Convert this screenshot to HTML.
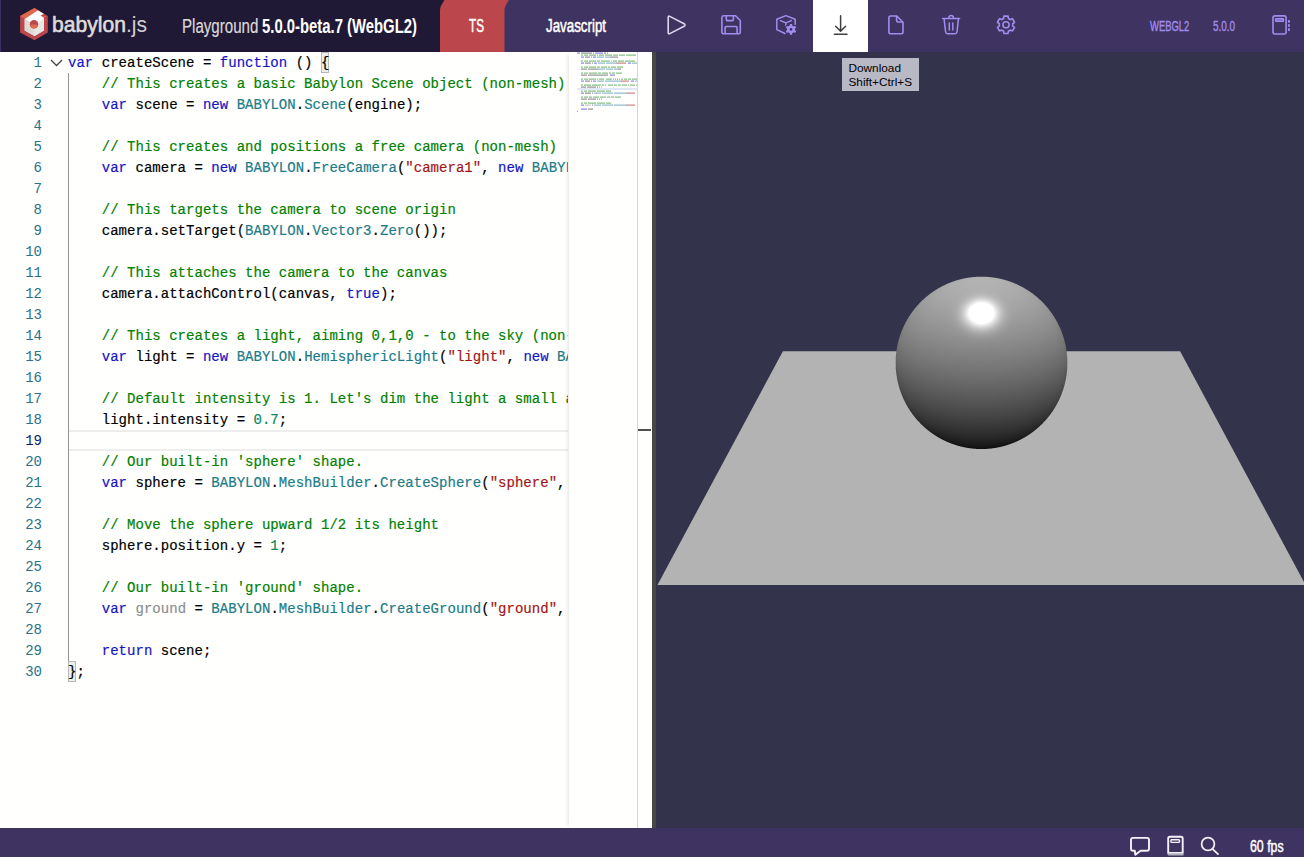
<!DOCTYPE html>
<html><head><meta charset="utf-8">
<style>
*{margin:0;padding:0;box-sizing:border-box}
html,body{width:1304px;height:857px;overflow:hidden;background:#fff;font-family:"Liberation Sans",sans-serif}
#hdr{position:absolute;left:0;top:0;width:1304px;height:52px;background:#3f3461}
#logoarea{position:absolute;left:0;top:0;width:520px;height:52px;background:#201936}
#tsTab{position:absolute;left:440px;top:0;width:72px;height:52px;background:#bb464b;border-top-left-radius:8px}
#jsTab{position:absolute;left:504px;top:0;width:146px;height:52px;background:#3f3461;border-top-left-radius:8px}
#dl{position:absolute;left:813px;top:0;width:55px;height:52px;background:#fff}
.tx{position:absolute;white-space:nowrap;transform-origin:0 0;line-height:1}
#editor{position:absolute;left:0;top:52px;width:652px;height:776px;background:#fffffe;overflow:hidden}
#splitter{position:absolute;left:652px;top:52px;width:4px;height:776px;background:#474747}
#canvasWrap{position:absolute;left:656px;top:52px;width:648px;height:776px;background:#33334c;overflow:hidden}
#footer{position:absolute;left:0;top:828px;width:1304px;height:29px;background:#3f3461}
#tooltip{position:absolute;left:842px;top:58px;width:77px;height:33px;background:#b9b8c5;font-size:11.8px;color:#000;padding:2.5px 0 0 6.5px;line-height:14.4px}
.lns{position:absolute;left:0;top:1px;width:42px;height:776px}
.code{position:absolute;left:68px;top:0;width:500px;height:776px;overflow:hidden;font-family:"Liberation Mono",monospace;font-size:14px;letter-spacing:0.03px;-webkit-text-stroke:0.18px currentColor;white-space:pre;color:#000}
.ln{position:absolute;left:0;width:42px;text-align:right;font-family:"Liberation Mono",monospace;font-size:14px;color:#2a7189;height:21px;line-height:21px}
.ln.cur{color:#0b216f}
.cl{position:absolute;left:0;height:21px;line-height:21px;margin-top:1px}
.k{color:#1414c4}.c{color:#008000}.s{color:#a31515}.n{color:#098658}.t{color:#207b86}.u{color:#8e8e8e}
.bm{}
.bbox{position:absolute;width:8px;height:21px;background:#e9f0e9;border:1px solid #b9b9b9}
#curline{position:absolute;left:69px;top:378px;width:499px;height:21px;border-top:2px solid #eeeeee;border-bottom:2px solid #eeeeee}
#guide{position:absolute;left:68px;top:21px;width:1px;height:588px;background:#939393}
#minimap{position:absolute;left:569px;top:0;width:68px;height:776px;background:#fffffe;box-shadow:-4px 0 4px -3px rgba(0,0,0,0.12)}
#mmline{position:absolute;left:637px;top:0;width:1px;height:776px;background:#d6d6d6}
#scrollmark{position:absolute;left:638px;top:377px;width:13px;height:2px;background:#505050}
</style></head><body>
<div id="hdr"></div>
<div id="logoarea"></div><div style="position:absolute;left:0;top:0;width:1px;height:52px;background:#3a3060"></div>
<svg style="position:absolute;left:0;top:0" width="1304" height="52" viewBox="0 0 1304 52">
 <path d="M440,52 L440,11 C440,8.5 440.6,6.5 441.6,4.8 L444.4,0 L520,0 L520,52Z" fill="#bb464b"/>
 <path d="M504.5,52 L504.5,11 C504.5,8.5 505.1,6.5 506.1,4.8 L508.9,0 L1304,0 L1304,52Z" fill="#3f3461"/>
</svg>
<div id="dl"></div>
<svg style="position:absolute;left:0;top:0" width="1304" height="52" viewBox="0 0 1304 52">
 <!-- logo -->
 <polygon points="34.5,8 47.8,16 47.8,32.5 34.5,40.2 20.1,32.5 20.1,16" fill="#bb464b"/>
 <polygon points="20.1,16 34.5,8 38,10.2 24.7,19" fill="#e0684b"/>
 <polygon points="24.7,19 38,10.2 43.9,14 40.5,15.5 43.9,17.5 43.9,30.6 34.5,35.9 24.7,30.6" fill="#ffffff"/>
 <polygon points="24.7,19 34.5,24.5 34.5,35.9 24.7,30.6" fill="#dedbd5"/>
 <polygon points="34.5,24.5 43.9,19 43.9,30.6 34.5,35.9" fill="#e8e6e1"/>
 <polygon points="40.5,15.5 46.5,16.5 43.9,17.5" fill="#e0684b"/>
 <circle cx="34" cy="24.3" r="4.2" fill="#bb464b"/>
 <path d="M30,25.5 Q34,23 38,25.5 Q37,28.5 34,28.5 Q31,28.5 30,25.5Z" fill="#e0684b"/>
 <!-- play -->
 <path d="M668.2,17.2 Q668.2,15.6 669.8,16.4 L684.6,24 Q685.6,25 684.6,26 L669.8,33.6 Q668.2,34.4 668.2,32.8 Z" fill="none" stroke="#dcd6ee" stroke-width="1.6" stroke-linejoin="round"/>
 <!-- save -->
 <g fill="none" stroke="#a18cf0" stroke-width="1.6" stroke-linejoin="round">
  <path d="M723.5,15.7 L735.5,15.7 L740.3,20.5 L740.3,32 Q740.3,33.7 738.6,33.7 L723.6,33.7 Q721.9,33.7 721.9,32 L721.9,17.4 Q721.9,15.7 723.5,15.7Z"/>
  <path d="M726.3,15.7 L726.3,19.4 Q726.3,20.6 727.5,20.6 L732.2,20.6 Q733.4,20.6 733.4,19.4 L733.4,15.7"/>
  <path d="M725.1,33.7 L725.1,27.6 Q725.1,26.5 726.2,26.5 L736,26.5 Q737.1,26.5 737.1,27.6 L737.1,33.7"/>
 </g>
 <!-- cube gear -->
 <g fill="none" stroke="#a18cf0" stroke-width="1.5" stroke-linejoin="round" stroke-linecap="round">
  <path d="M795.2,24.5 L795.2,19.2 L785.9,15.6 L776.8,19.2 L776.8,29.6 L785,33.5"/>
  <path d="M780.4,20.6 L785.9,22.9 L791.3,20.6 M785.9,22.9 L785.9,25.6"/>
 </g>
 <g id="cg"><path d="M792.17,25.57 L792.14,24.02 L789.86,24.02 L789.83,25.57 A4.00,4.00 0 0 0 788.27,26.47 L786.91,25.72 L785.77,27.70 L787.10,28.50 A4.00,4.00 0 0 0 787.10,30.30 L785.77,31.10 L786.91,33.08 L788.27,32.33 A4.00,4.00 0 0 0 789.83,33.23 L789.86,34.78 L792.14,34.78 L792.17,33.23 A4.00,4.00 0 0 0 793.73,32.33 L795.09,33.08 L796.23,31.10 L794.90,30.30 A4.00,4.00 0 0 0 794.90,28.50 L796.23,27.70 L795.09,25.72 L793.73,26.47 A4.00,4.00 0 0 0 792.17,25.57 Z" fill="#a18cf0" stroke="#3f3461" stroke-width="1.6" paint-order="stroke"/><circle cx="791" cy="29.4" r="1.3" fill="#3f3461"/></g>
 <!-- download -->
 <g fill="none" stroke="#404040" stroke-width="1.5" stroke-linecap="round" stroke-linejoin="round">
  <path d="M840.6,15.8 L840.6,30.8 M835.6,26.2 L840.6,31.1 L845.6,26.2"/>
  <path d="M834.4,34.2 L847,34.2"/>
 </g>
 <!-- file -->
 <g fill="none" stroke="#a18cf0" stroke-width="1.6" stroke-linejoin="round">
  <path d="M890.6,16 L896.8,16 L903,22.2 L903,32.1 Q903,33.8 901.3,33.8 L890.6,33.8 Q888.9,33.8 888.9,32.1 L888.9,17.7 Q888.9,16 890.6,16Z"/>
  <path d="M896.6,16 L896.6,20.6 Q896.6,22 898,22 L903,22"/>
 </g>
 <!-- trash -->
 <g fill="none" stroke="#a18cf0" stroke-width="1.5" stroke-linecap="round" stroke-linejoin="round">
  <path d="M942.6,18.6 L959.6,18.6"/>
  <path d="M948.7,18.4 Q948.7,15.6 951.1,15.6 Q953.5,15.6 953.5,18.4"/>
  <path d="M944.1,18.8 L945.6,32 Q945.8,33.8 947.6,33.8 L955,33.8 Q956.8,33.8 957,32 L958.4,18.8"/>
  <path d="M949.3,23 L949.3,30 M952.8,23 L952.8,30"/>
 </g>
 <!-- gear -->
 <path id="gearP" fill="none" stroke="#a18cf0" stroke-width="1.6" stroke-linejoin="round" d="M1008.40,18.55 L1008.08,16.15 L1003.92,16.15 L1003.60,18.55 A6.70,6.70 0 0 0 1001.78,19.59 L999.54,18.67 L997.47,22.27 L999.38,23.75 A6.70,6.70 0 0 0 999.38,25.85 L997.47,27.33 L999.54,30.93 L1001.78,30.01 A6.70,6.70 0 0 0 1003.60,31.05 L1003.92,33.45 L1008.08,33.45 L1008.40,31.05 A6.70,6.70 0 0 0 1010.22,30.01 L1012.46,30.93 L1014.53,27.33 L1012.62,25.85 A6.70,6.70 0 0 0 1012.62,23.75 L1014.53,22.27 L1012.46,18.67 L1010.22,19.59 A6.70,6.70 0 0 0 1008.40,18.55 Z"/>
 <circle cx="1006" cy="24.8" r="3.1" fill="none" stroke="#a18cf0" stroke-width="1.5"/>
 <!-- notebook -->
 <g fill="none" stroke="#a18cf0" stroke-width="1.6">
  <rect x="1273" y="15.9" width="13.1" height="18.1" rx="2"/>
  <rect x="1275.7" y="18.7" width="7.7" height="2.6" rx="0.6" fill="#6b58c4"/>
 </g>
 <g fill="#a18cf0">
  <rect x="1288" y="20.1" width="1.9" height="2.6"/>
  <rect x="1288" y="24.2" width="1.9" height="2.6"/>
  <rect x="1288" y="28.3" width="1.9" height="2.6"/>
 </g>
</svg>
<div class="tx" id="t_bab" style="left:52px;top:14px;transform:scaleX(0.959);font-size:22px;color:#dedbdb;-webkit-text-stroke:0.6px #dedbdb">babylon<span style="-webkit-text-stroke:0;color:#d0cdd0">.js</span></div>
<div class="tx" id="t_pg" style="left:181.7px;top:16px;transform:scaleX(0.755);font-size:20px;color:#dcd8d8;-webkit-text-stroke:0.2px currentColor">Playground</div><div class="tx" id="t_pg2" style="left:261.6px;top:16px;transform:scaleX(0.743);font-size:20px;font-weight:bold;color:#fff">5.0.0-beta.7 (WebGL2)</div>
<div class="tx" id="t_ts" style="-webkit-text-stroke:0.5px currentColor;left:469px;top:17px;transform:scaleX(0.652);font-size:18px;color:#fff">TS</div>
<div class="tx" id="t_js" style="-webkit-text-stroke:0.5px currentColor;left:546px;top:18px;transform:scaleX(0.762);font-size:17.5px;color:#fff">Javascript</div>
<div class="tx" id="t_webgl" style="-webkit-text-stroke:0.35px currentColor;left:1150px;top:19px;transform:scaleX(0.672);font-size:14px;color:#a18cf0">WEBGL2</div>
<div class="tx" id="t_ver" style="-webkit-text-stroke:0.35px currentColor;left:1213px;top:19px;transform:scaleX(0.707);font-size:14px;color:#a18cf0">5.0.0</div>

<div id="editor">
 <div class="lns">
<div class="ln" style="top:0px">1</div>
<div class="ln" style="top:21px">2</div>
<div class="ln" style="top:42px">3</div>
<div class="ln" style="top:63px">4</div>
<div class="ln" style="top:84px">5</div>
<div class="ln" style="top:105px">6</div>
<div class="ln" style="top:126px">7</div>
<div class="ln" style="top:147px">8</div>
<div class="ln" style="top:168px">9</div>
<div class="ln" style="top:189px">10</div>
<div class="ln" style="top:210px">11</div>
<div class="ln" style="top:231px">12</div>
<div class="ln" style="top:252px">13</div>
<div class="ln" style="top:273px">14</div>
<div class="ln" style="top:294px">15</div>
<div class="ln" style="top:315px">16</div>
<div class="ln" style="top:336px">17</div>
<div class="ln" style="top:357px">18</div>
<div class="ln cur" style="top:378px">19</div>
<div class="ln" style="top:399px">20</div>
<div class="ln" style="top:420px">21</div>
<div class="ln" style="top:441px">22</div>
<div class="ln" style="top:462px">23</div>
<div class="ln" style="top:483px">24</div>
<div class="ln" style="top:504px">25</div>
<div class="ln" style="top:525px">26</div>
<div class="ln" style="top:546px">27</div>
<div class="ln" style="top:567px">28</div>
<div class="ln" style="top:588px">29</div>
<div class="ln" style="top:609px">30</div>
 </div>
 <div id="curline"></div>
 <div class="bbox" style="left:321px;top:0"></div>
 <div class="bbox" style="left:68px;top:609px"></div>
 <div class="code">
<div class="cl" style="top:0px"><span class="k">var</span> createScene = <span class="k">function</span> () <span class="bm">{</span></div>
<div class="cl" style="top:21px">    <span class="c">// This creates a basic Babylon Scene object (non-mesh)</span></div>
<div class="cl" style="top:42px">    <span class="k">var</span> scene = <span class="k">new</span> <span class="t">BABYLON</span>.<span class="t">Scene</span>(engine);</div>
<div class="cl" style="top:63px"></div>
<div class="cl" style="top:84px">    <span class="c">// This creates and positions a free camera (non-mesh)</span></div>
<div class="cl" style="top:105px">    <span class="k">var</span> camera = <span class="k">new</span> <span class="t">BABYLON</span>.<span class="t">FreeCamera</span>(<span class="s">&quot;camera1&quot;</span>, <span class="k">new</span> <span class="t">BABYLON</span>.<span class="t">Vector3</span>(<span class="n">0</span>, <span class="n">5</span>, -<span class="n">10</span>), scene);</div>
<div class="cl" style="top:126px"></div>
<div class="cl" style="top:147px">    <span class="c">// This targets the camera to scene origin</span></div>
<div class="cl" style="top:168px">    camera.setTarget(<span class="t">BABYLON</span>.<span class="t">Vector3</span>.<span class="t">Zero</span>());</div>
<div class="cl" style="top:189px"></div>
<div class="cl" style="top:210px">    <span class="c">// This attaches the camera to the canvas</span></div>
<div class="cl" style="top:231px">    camera.attachControl(canvas, <span class="k">true</span>);</div>
<div class="cl" style="top:252px"></div>
<div class="cl" style="top:273px">    <span class="c">// This creates a light, aiming 0,1,0 - to the sky (non-mesh)</span></div>
<div class="cl" style="top:294px">    <span class="k">var</span> light = <span class="k">new</span> <span class="t">BABYLON</span>.<span class="t">HemisphericLight</span>(<span class="s">&quot;light&quot;</span>, <span class="k">new</span> <span class="t">BABYLON</span>.<span class="t">Vector3</span>(<span class="n">0</span>, <span class="n">1</span>, <span class="n">0</span>), scene);</div>
<div class="cl" style="top:315px"></div>
<div class="cl" style="top:336px">    <span class="c">// Default intensity is 1. Let&#x27;s dim the light a small amount</span></div>
<div class="cl" style="top:357px">    light.intensity = <span class="n">0.7</span>;</div>
<div class="cl" style="top:378px"></div>
<div class="cl" style="top:399px">    <span class="c">// Our built-in &#x27;sphere&#x27; shape.</span></div>
<div class="cl" style="top:420px">    <span class="k">var</span> sphere = <span class="t">BABYLON</span>.<span class="t">MeshBuilder</span>.<span class="t">CreateSphere</span>(<span class="s">&quot;sphere&quot;</span>, {diameter: <span class="n">2</span>, segments: <span class="n">32</span>}, scene);</div>
<div class="cl" style="top:441px"></div>
<div class="cl" style="top:462px">    <span class="c">// Move the sphere upward 1/2 its height</span></div>
<div class="cl" style="top:483px">    sphere.position.y = <span class="n">1</span>;</div>
<div class="cl" style="top:504px"></div>
<div class="cl" style="top:525px">    <span class="c">// Our built-in &#x27;ground&#x27; shape.</span></div>
<div class="cl" style="top:546px">    <span class="k">var</span> <span class="u">ground</span> = <span class="t">BABYLON</span>.<span class="t">MeshBuilder</span>.<span class="t">CreateGround</span>(<span class="s">&quot;ground&quot;</span>, {width: <span class="n">6</span>, height: <span class="n">6</span>}, scene);</div>
<div class="cl" style="top:567px"></div>
<div class="cl" style="top:588px">    <span class="k">return</span> scene;</div>
<div class="cl" style="top:609px"><span class="bm">}</span>;</div>
 </div>
 <div id="guide"></div>
 <svg style="position:absolute;left:50.4px;top:6.8px" width="13" height="8" viewBox="0 0 13 8"><path d="M1,1 L6.5,6.5 L12,1" fill="none" stroke="#424242" stroke-width="1.25"/></svg>
 <div id="minimap">
  <div style="position:absolute;left:8px;top:36px;width:60px;height:2px;background:#dfe9f6"></div><svg style="position:absolute;left:8px;top:0" width="60" height="80" viewBox="0 0 60 80">
<path d="M0.1,0.4h0.8v1.3h-0.8z M1.1,0.4h0.8v1.3h-0.8z M2.1,0.4h0.8v1.3h-0.8z" fill="#5555ee" fill-opacity="0.85"/>
<path d="M4.1,0.4h0.8v1.3h-0.8z M5.1,0.4h0.8v1.3h-0.8z M6.1,0.4h0.8v1.3h-0.8z M7.1,0.4h0.8v1.3h-0.8z M8.1,0.4h0.8v1.3h-0.8z M9.1,0.4h0.8v1.3h-0.8z M10.1,0.4h0.8v1.3h-0.8z M11.1,0.4h0.8v1.3h-0.8z M12.1,0.4h0.8v1.3h-0.8z M13.1,0.4h0.8v1.3h-0.8z M14.1,0.4h0.8v1.3h-0.8z" fill="#666666" fill-opacity="0.85"/>
<path d="M16.1,0.4h0.8v1.3h-0.8z" fill="#666666" fill-opacity="0.85"/>
<path d="M18.1,0.4h0.8v1.3h-0.8z M19.1,0.4h0.8v1.3h-0.8z M20.1,0.4h0.8v1.3h-0.8z M21.1,0.4h0.8v1.3h-0.8z M22.1,0.4h0.8v1.3h-0.8z M23.1,0.4h0.8v1.3h-0.8z M24.1,0.4h0.8v1.3h-0.8z M25.1,0.4h0.8v1.3h-0.8z" fill="#5555ee" fill-opacity="0.85"/>
<path d="M27.1,0.4h0.8v1.3h-0.8z" fill="#666666" fill-opacity="0.85"/>
<path d="M28.1,0.4h0.8v1.3h-0.8z" fill="#666666" fill-opacity="0.85"/>
<path d="M30.1,0.4h0.8v1.3h-0.8z" fill="#666666" fill-opacity="0.85"/>
<path d="M4.1,2.4h0.8v1.3h-0.8z M5.1,2.4h0.8v1.3h-0.8z M7.1,2.4h0.8v1.3h-0.8z M8.1,2.4h0.8v1.3h-0.8z M9.1,2.4h0.8v1.3h-0.8z M10.1,2.4h0.8v1.3h-0.8z M12.1,2.4h0.8v1.3h-0.8z M13.1,2.4h0.8v1.3h-0.8z M14.1,2.4h0.8v1.3h-0.8z M15.1,2.4h0.8v1.3h-0.8z M16.1,2.4h0.8v1.3h-0.8z M17.1,2.4h0.8v1.3h-0.8z M18.1,2.4h0.8v1.3h-0.8z M20.1,2.4h0.8v1.3h-0.8z M22.1,2.4h0.8v1.3h-0.8z M23.1,2.4h0.8v1.3h-0.8z M24.1,2.4h0.8v1.3h-0.8z M25.1,2.4h0.8v1.3h-0.8z M26.1,2.4h0.8v1.3h-0.8z M28.1,2.4h0.8v1.3h-0.8z M29.1,2.4h0.8v1.3h-0.8z M30.1,2.4h0.8v1.3h-0.8z M31.1,2.4h0.8v1.3h-0.8z M32.1,2.4h0.8v1.3h-0.8z M33.1,2.4h0.8v1.3h-0.8z M34.1,2.4h0.8v1.3h-0.8z M36.1,2.4h0.8v1.3h-0.8z M37.1,2.4h0.8v1.3h-0.8z M38.1,2.4h0.8v1.3h-0.8z M39.1,2.4h0.8v1.3h-0.8z M40.1,2.4h0.8v1.3h-0.8z M42.1,2.4h0.8v1.3h-0.8z M43.1,2.4h0.8v1.3h-0.8z M44.1,2.4h0.8v1.3h-0.8z M45.1,2.4h0.8v1.3h-0.8z M46.1,2.4h0.8v1.3h-0.8z M47.1,2.4h0.8v1.3h-0.8z M49.1,2.4h0.8v1.3h-0.8z M50.1,2.4h0.8v1.3h-0.8z M51.1,2.4h0.8v1.3h-0.8z M52.1,2.4h0.8v1.3h-0.8z M53.1,2.4h0.8v1.3h-0.8z M54.1,2.4h0.8v1.3h-0.8z M55.1,2.4h0.8v1.3h-0.8z M56.1,2.4h0.8v1.3h-0.8z M57.1,2.4h0.8v1.3h-0.8z M58.1,2.4h0.8v1.3h-0.8z" fill="#4fa24f" fill-opacity="0.85"/>
<path d="M4.1,4.4h0.8v1.3h-0.8z M5.1,4.4h0.8v1.3h-0.8z M6.1,4.4h0.8v1.3h-0.8z" fill="#5555ee" fill-opacity="0.85"/>
<path d="M8.1,4.4h0.8v1.3h-0.8z M9.1,4.4h0.8v1.3h-0.8z M10.1,4.4h0.8v1.3h-0.8z M11.1,4.4h0.8v1.3h-0.8z M12.1,4.4h0.8v1.3h-0.8z" fill="#666666" fill-opacity="0.85"/>
<path d="M14.1,4.4h0.8v1.3h-0.8z" fill="#666666" fill-opacity="0.85"/>
<path d="M16.1,4.4h0.8v1.3h-0.8z M17.1,4.4h0.8v1.3h-0.8z M18.1,4.4h0.8v1.3h-0.8z" fill="#5555ee" fill-opacity="0.85"/>
<path d="M20.1,4.4h0.8v1.3h-0.8z M21.1,4.4h0.8v1.3h-0.8z M22.1,4.4h0.8v1.3h-0.8z M23.1,4.4h0.8v1.3h-0.8z M24.1,4.4h0.8v1.3h-0.8z M25.1,4.4h0.8v1.3h-0.8z M26.1,4.4h0.8v1.3h-0.8z" fill="#5aa0b4" fill-opacity="0.85"/>
<path d="M28.1,4.4h0.8v1.3h-0.8z M29.1,4.4h0.8v1.3h-0.8z M30.1,4.4h0.8v1.3h-0.8z M31.1,4.4h0.8v1.3h-0.8z M32.1,4.4h0.8v1.3h-0.8z" fill="#5aa0b4" fill-opacity="0.85"/>
<path d="M33.1,4.4h0.8v1.3h-0.8z" fill="#666666" fill-opacity="0.85"/>
<path d="M34.1,4.4h0.8v1.3h-0.8z M35.1,4.4h0.8v1.3h-0.8z M36.1,4.4h0.8v1.3h-0.8z M37.1,4.4h0.8v1.3h-0.8z M38.1,4.4h0.8v1.3h-0.8z M39.1,4.4h0.8v1.3h-0.8z" fill="#666666" fill-opacity="0.85"/>
<path d="M40.1,4.4h0.8v1.3h-0.8z" fill="#666666" fill-opacity="0.85"/>
<path d="M4.1,8.4h0.8v1.3h-0.8z M5.1,8.4h0.8v1.3h-0.8z M7.1,8.4h0.8v1.3h-0.8z M8.1,8.4h0.8v1.3h-0.8z M9.1,8.4h0.8v1.3h-0.8z M10.1,8.4h0.8v1.3h-0.8z M12.1,8.4h0.8v1.3h-0.8z M13.1,8.4h0.8v1.3h-0.8z M14.1,8.4h0.8v1.3h-0.8z M15.1,8.4h0.8v1.3h-0.8z M16.1,8.4h0.8v1.3h-0.8z M17.1,8.4h0.8v1.3h-0.8z M18.1,8.4h0.8v1.3h-0.8z M20.1,8.4h0.8v1.3h-0.8z M21.1,8.4h0.8v1.3h-0.8z M22.1,8.4h0.8v1.3h-0.8z M24.1,8.4h0.8v1.3h-0.8z M25.1,8.4h0.8v1.3h-0.8z M26.1,8.4h0.8v1.3h-0.8z M27.1,8.4h0.8v1.3h-0.8z M28.1,8.4h0.8v1.3h-0.8z M29.1,8.4h0.8v1.3h-0.8z M30.1,8.4h0.8v1.3h-0.8z M31.1,8.4h0.8v1.3h-0.8z M32.1,8.4h0.8v1.3h-0.8z M34.1,8.4h0.8v1.3h-0.8z M36.1,8.4h0.8v1.3h-0.8z M37.1,8.4h0.8v1.3h-0.8z M38.1,8.4h0.8v1.3h-0.8z M39.1,8.4h0.8v1.3h-0.8z M41.1,8.4h0.8v1.3h-0.8z M42.1,8.4h0.8v1.3h-0.8z M43.1,8.4h0.8v1.3h-0.8z M44.1,8.4h0.8v1.3h-0.8z M45.1,8.4h0.8v1.3h-0.8z M46.1,8.4h0.8v1.3h-0.8z M48.1,8.4h0.8v1.3h-0.8z M49.1,8.4h0.8v1.3h-0.8z M50.1,8.4h0.8v1.3h-0.8z M51.1,8.4h0.8v1.3h-0.8z M52.1,8.4h0.8v1.3h-0.8z M53.1,8.4h0.8v1.3h-0.8z M54.1,8.4h0.8v1.3h-0.8z M55.1,8.4h0.8v1.3h-0.8z M56.1,8.4h0.8v1.3h-0.8z M57.1,8.4h0.8v1.3h-0.8z" fill="#4fa24f" fill-opacity="0.85"/>
<path d="M4.1,10.4h0.8v1.3h-0.8z M5.1,10.4h0.8v1.3h-0.8z M6.1,10.4h0.8v1.3h-0.8z" fill="#5555ee" fill-opacity="0.85"/>
<path d="M8.1,10.4h0.8v1.3h-0.8z M9.1,10.4h0.8v1.3h-0.8z M10.1,10.4h0.8v1.3h-0.8z M11.1,10.4h0.8v1.3h-0.8z M12.1,10.4h0.8v1.3h-0.8z M13.1,10.4h0.8v1.3h-0.8z" fill="#666666" fill-opacity="0.85"/>
<path d="M15.1,10.4h0.8v1.3h-0.8z" fill="#666666" fill-opacity="0.85"/>
<path d="M17.1,10.4h0.8v1.3h-0.8z M18.1,10.4h0.8v1.3h-0.8z M19.1,10.4h0.8v1.3h-0.8z" fill="#5555ee" fill-opacity="0.85"/>
<path d="M21.1,10.4h0.8v1.3h-0.8z M22.1,10.4h0.8v1.3h-0.8z M23.1,10.4h0.8v1.3h-0.8z M24.1,10.4h0.8v1.3h-0.8z M25.1,10.4h0.8v1.3h-0.8z M26.1,10.4h0.8v1.3h-0.8z M27.1,10.4h0.8v1.3h-0.8z" fill="#5aa0b4" fill-opacity="0.85"/>
<path d="M29.1,10.4h0.8v1.3h-0.8z M30.1,10.4h0.8v1.3h-0.8z M31.1,10.4h0.8v1.3h-0.8z M32.1,10.4h0.8v1.3h-0.8z M33.1,10.4h0.8v1.3h-0.8z M34.1,10.4h0.8v1.3h-0.8z M35.1,10.4h0.8v1.3h-0.8z M36.1,10.4h0.8v1.3h-0.8z M37.1,10.4h0.8v1.3h-0.8z M38.1,10.4h0.8v1.3h-0.8z" fill="#5aa0b4" fill-opacity="0.85"/>
<path d="M39.1,10.4h0.8v1.3h-0.8z" fill="#666666" fill-opacity="0.85"/>
<path d="M40.1,10.4h0.8v1.3h-0.8z M41.1,10.4h0.8v1.3h-0.8z M42.1,10.4h0.8v1.3h-0.8z M43.1,10.4h0.8v1.3h-0.8z M44.1,10.4h0.8v1.3h-0.8z M45.1,10.4h0.8v1.3h-0.8z M46.1,10.4h0.8v1.3h-0.8z M47.1,10.4h0.8v1.3h-0.8z M48.1,10.4h0.8v1.3h-0.8z" fill="#b45050" fill-opacity="0.85"/>
<path d="M51.1,10.4h0.8v1.3h-0.8z M52.1,10.4h0.8v1.3h-0.8z M53.1,10.4h0.8v1.3h-0.8z" fill="#5555ee" fill-opacity="0.85"/>
<path d="M55.1,10.4h0.8v1.3h-0.8z M56.1,10.4h0.8v1.3h-0.8z M57.1,10.4h0.8v1.3h-0.8z M58.1,10.4h0.8v1.3h-0.8z M59.1,10.4h0.8v1.3h-0.8z M60.1,10.4h0.8v1.3h-0.8z M61.1,10.4h0.8v1.3h-0.8z" fill="#5aa0b4" fill-opacity="0.85"/>
<path d="M63.1,10.4h0.8v1.3h-0.8z M64.1,10.4h0.8v1.3h-0.8z M65.1,10.4h0.8v1.3h-0.8z M66.1,10.4h0.8v1.3h-0.8z M67.1,10.4h0.8v1.3h-0.8z M68.1,10.4h0.8v1.3h-0.8z M69.1,10.4h0.8v1.3h-0.8z" fill="#5aa0b4" fill-opacity="0.85"/>
<path d="M70.1,10.4h0.8v1.3h-0.8z" fill="#666666" fill-opacity="0.85"/>
<path d="M71.1,10.4h0.8v1.3h-0.8z" fill="#50a080" fill-opacity="0.85"/>
<path d="M74.1,10.4h0.8v1.3h-0.8z" fill="#50a080" fill-opacity="0.85"/>
<path d="M77.1,10.4h0.8v1.3h-0.8z" fill="#666666" fill-opacity="0.85"/>
<path d="M78.1,10.4h0.8v1.3h-0.8z M79.1,10.4h0.8v1.3h-0.8z" fill="#50a080" fill-opacity="0.85"/>
<path d="M80.1,10.4h0.8v1.3h-0.8z" fill="#666666" fill-opacity="0.85"/>
<path d="M83.1,10.4h0.8v1.3h-0.8z M84.1,10.4h0.8v1.3h-0.8z M85.1,10.4h0.8v1.3h-0.8z M86.1,10.4h0.8v1.3h-0.8z M87.1,10.4h0.8v1.3h-0.8z" fill="#666666" fill-opacity="0.85"/>
<path d="M88.1,10.4h0.8v1.3h-0.8z" fill="#666666" fill-opacity="0.85"/>
<path d="M4.1,14.4h0.8v1.3h-0.8z M5.1,14.4h0.8v1.3h-0.8z M7.1,14.4h0.8v1.3h-0.8z M8.1,14.4h0.8v1.3h-0.8z M9.1,14.4h0.8v1.3h-0.8z M10.1,14.4h0.8v1.3h-0.8z M12.1,14.4h0.8v1.3h-0.8z M13.1,14.4h0.8v1.3h-0.8z M14.1,14.4h0.8v1.3h-0.8z M15.1,14.4h0.8v1.3h-0.8z M16.1,14.4h0.8v1.3h-0.8z M17.1,14.4h0.8v1.3h-0.8z M18.1,14.4h0.8v1.3h-0.8z M20.1,14.4h0.8v1.3h-0.8z M21.1,14.4h0.8v1.3h-0.8z M22.1,14.4h0.8v1.3h-0.8z M24.1,14.4h0.8v1.3h-0.8z M25.1,14.4h0.8v1.3h-0.8z M26.1,14.4h0.8v1.3h-0.8z M27.1,14.4h0.8v1.3h-0.8z M28.1,14.4h0.8v1.3h-0.8z M29.1,14.4h0.8v1.3h-0.8z M31.1,14.4h0.8v1.3h-0.8z M32.1,14.4h0.8v1.3h-0.8z M34.1,14.4h0.8v1.3h-0.8z M35.1,14.4h0.8v1.3h-0.8z M36.1,14.4h0.8v1.3h-0.8z M37.1,14.4h0.8v1.3h-0.8z M38.1,14.4h0.8v1.3h-0.8z M40.1,14.4h0.8v1.3h-0.8z M41.1,14.4h0.8v1.3h-0.8z M42.1,14.4h0.8v1.3h-0.8z M43.1,14.4h0.8v1.3h-0.8z M44.1,14.4h0.8v1.3h-0.8z M45.1,14.4h0.8v1.3h-0.8z" fill="#4fa24f" fill-opacity="0.85"/>
<path d="M4.1,16.4h0.8v1.3h-0.8z M5.1,16.4h0.8v1.3h-0.8z M6.1,16.4h0.8v1.3h-0.8z M7.1,16.4h0.8v1.3h-0.8z M8.1,16.4h0.8v1.3h-0.8z M9.1,16.4h0.8v1.3h-0.8z" fill="#666666" fill-opacity="0.85"/>
<path d="M11.1,16.4h0.8v1.3h-0.8z M12.1,16.4h0.8v1.3h-0.8z M13.1,16.4h0.8v1.3h-0.8z M14.1,16.4h0.8v1.3h-0.8z M15.1,16.4h0.8v1.3h-0.8z M16.1,16.4h0.8v1.3h-0.8z M17.1,16.4h0.8v1.3h-0.8z M18.1,16.4h0.8v1.3h-0.8z M19.1,16.4h0.8v1.3h-0.8z" fill="#666666" fill-opacity="0.85"/>
<path d="M20.1,16.4h0.8v1.3h-0.8z" fill="#666666" fill-opacity="0.85"/>
<path d="M21.1,16.4h0.8v1.3h-0.8z M22.1,16.4h0.8v1.3h-0.8z M23.1,16.4h0.8v1.3h-0.8z M24.1,16.4h0.8v1.3h-0.8z M25.1,16.4h0.8v1.3h-0.8z M26.1,16.4h0.8v1.3h-0.8z M27.1,16.4h0.8v1.3h-0.8z" fill="#5aa0b4" fill-opacity="0.85"/>
<path d="M29.1,16.4h0.8v1.3h-0.8z M30.1,16.4h0.8v1.3h-0.8z M31.1,16.4h0.8v1.3h-0.8z M32.1,16.4h0.8v1.3h-0.8z M33.1,16.4h0.8v1.3h-0.8z M34.1,16.4h0.8v1.3h-0.8z M35.1,16.4h0.8v1.3h-0.8z" fill="#5aa0b4" fill-opacity="0.85"/>
<path d="M37.1,16.4h0.8v1.3h-0.8z M38.1,16.4h0.8v1.3h-0.8z M39.1,16.4h0.8v1.3h-0.8z M40.1,16.4h0.8v1.3h-0.8z" fill="#5aa0b4" fill-opacity="0.85"/>
<path d="M41.1,16.4h0.8v1.3h-0.8z" fill="#666666" fill-opacity="0.85"/>
<path d="M42.1,16.4h0.8v1.3h-0.8z" fill="#666666" fill-opacity="0.85"/>
<path d="M43.1,16.4h0.8v1.3h-0.8z" fill="#666666" fill-opacity="0.85"/>
<path d="M4.1,20.4h0.8v1.3h-0.8z M5.1,20.4h0.8v1.3h-0.8z M7.1,20.4h0.8v1.3h-0.8z M8.1,20.4h0.8v1.3h-0.8z M9.1,20.4h0.8v1.3h-0.8z M10.1,20.4h0.8v1.3h-0.8z M12.1,20.4h0.8v1.3h-0.8z M13.1,20.4h0.8v1.3h-0.8z M14.1,20.4h0.8v1.3h-0.8z M15.1,20.4h0.8v1.3h-0.8z M16.1,20.4h0.8v1.3h-0.8z M17.1,20.4h0.8v1.3h-0.8z M18.1,20.4h0.8v1.3h-0.8z M19.1,20.4h0.8v1.3h-0.8z M21.1,20.4h0.8v1.3h-0.8z M22.1,20.4h0.8v1.3h-0.8z M23.1,20.4h0.8v1.3h-0.8z M25.1,20.4h0.8v1.3h-0.8z M26.1,20.4h0.8v1.3h-0.8z M27.1,20.4h0.8v1.3h-0.8z M28.1,20.4h0.8v1.3h-0.8z M29.1,20.4h0.8v1.3h-0.8z M30.1,20.4h0.8v1.3h-0.8z M32.1,20.4h0.8v1.3h-0.8z M33.1,20.4h0.8v1.3h-0.8z M35.1,20.4h0.8v1.3h-0.8z M36.1,20.4h0.8v1.3h-0.8z M37.1,20.4h0.8v1.3h-0.8z M39.1,20.4h0.8v1.3h-0.8z M40.1,20.4h0.8v1.3h-0.8z M41.1,20.4h0.8v1.3h-0.8z M42.1,20.4h0.8v1.3h-0.8z M43.1,20.4h0.8v1.3h-0.8z M44.1,20.4h0.8v1.3h-0.8z" fill="#4fa24f" fill-opacity="0.85"/>
<path d="M4.1,22.4h0.8v1.3h-0.8z M5.1,22.4h0.8v1.3h-0.8z M6.1,22.4h0.8v1.3h-0.8z M7.1,22.4h0.8v1.3h-0.8z M8.1,22.4h0.8v1.3h-0.8z M9.1,22.4h0.8v1.3h-0.8z" fill="#666666" fill-opacity="0.85"/>
<path d="M11.1,22.4h0.8v1.3h-0.8z M12.1,22.4h0.8v1.3h-0.8z M13.1,22.4h0.8v1.3h-0.8z M14.1,22.4h0.8v1.3h-0.8z M15.1,22.4h0.8v1.3h-0.8z M16.1,22.4h0.8v1.3h-0.8z M17.1,22.4h0.8v1.3h-0.8z M18.1,22.4h0.8v1.3h-0.8z M19.1,22.4h0.8v1.3h-0.8z M20.1,22.4h0.8v1.3h-0.8z M21.1,22.4h0.8v1.3h-0.8z M22.1,22.4h0.8v1.3h-0.8z M23.1,22.4h0.8v1.3h-0.8z" fill="#666666" fill-opacity="0.85"/>
<path d="M24.1,22.4h0.8v1.3h-0.8z" fill="#666666" fill-opacity="0.85"/>
<path d="M25.1,22.4h0.8v1.3h-0.8z M26.1,22.4h0.8v1.3h-0.8z M27.1,22.4h0.8v1.3h-0.8z M28.1,22.4h0.8v1.3h-0.8z M29.1,22.4h0.8v1.3h-0.8z M30.1,22.4h0.8v1.3h-0.8z" fill="#666666" fill-opacity="0.85"/>
<path d="M33.1,22.4h0.8v1.3h-0.8z M34.1,22.4h0.8v1.3h-0.8z M35.1,22.4h0.8v1.3h-0.8z M36.1,22.4h0.8v1.3h-0.8z" fill="#5555ee" fill-opacity="0.85"/>
<path d="M37.1,22.4h0.8v1.3h-0.8z" fill="#666666" fill-opacity="0.85"/>
<path d="M4.1,26.4h0.8v1.3h-0.8z M5.1,26.4h0.8v1.3h-0.8z M7.1,26.4h0.8v1.3h-0.8z M8.1,26.4h0.8v1.3h-0.8z M9.1,26.4h0.8v1.3h-0.8z M10.1,26.4h0.8v1.3h-0.8z M12.1,26.4h0.8v1.3h-0.8z M13.1,26.4h0.8v1.3h-0.8z M14.1,26.4h0.8v1.3h-0.8z M15.1,26.4h0.8v1.3h-0.8z M16.1,26.4h0.8v1.3h-0.8z M17.1,26.4h0.8v1.3h-0.8z M18.1,26.4h0.8v1.3h-0.8z M20.1,26.4h0.8v1.3h-0.8z M22.1,26.4h0.8v1.3h-0.8z M23.1,26.4h0.8v1.3h-0.8z M24.1,26.4h0.8v1.3h-0.8z M25.1,26.4h0.8v1.3h-0.8z M26.1,26.4h0.8v1.3h-0.8z M29.1,26.4h0.8v1.3h-0.8z M30.1,26.4h0.8v1.3h-0.8z M31.1,26.4h0.8v1.3h-0.8z M32.1,26.4h0.8v1.3h-0.8z M33.1,26.4h0.8v1.3h-0.8z M34.1,26.4h0.8v1.3h-0.8z M36.1,26.4h0.8v1.3h-0.8z M38.1,26.4h0.8v1.3h-0.8z M40.1,26.4h0.8v1.3h-0.8z M42.1,26.4h0.8v1.3h-0.8z M44.1,26.4h0.8v1.3h-0.8z M45.1,26.4h0.8v1.3h-0.8z M47.1,26.4h0.8v1.3h-0.8z M48.1,26.4h0.8v1.3h-0.8z M49.1,26.4h0.8v1.3h-0.8z M51.1,26.4h0.8v1.3h-0.8z M52.1,26.4h0.8v1.3h-0.8z M53.1,26.4h0.8v1.3h-0.8z M55.1,26.4h0.8v1.3h-0.8z M56.1,26.4h0.8v1.3h-0.8z M57.1,26.4h0.8v1.3h-0.8z M58.1,26.4h0.8v1.3h-0.8z M59.1,26.4h0.8v1.3h-0.8z M60.1,26.4h0.8v1.3h-0.8z M61.1,26.4h0.8v1.3h-0.8z M62.1,26.4h0.8v1.3h-0.8z M63.1,26.4h0.8v1.3h-0.8z M64.1,26.4h0.8v1.3h-0.8z" fill="#4fa24f" fill-opacity="0.85"/>
<path d="M4.1,28.4h0.8v1.3h-0.8z M5.1,28.4h0.8v1.3h-0.8z M6.1,28.4h0.8v1.3h-0.8z" fill="#5555ee" fill-opacity="0.85"/>
<path d="M8.1,28.4h0.8v1.3h-0.8z M9.1,28.4h0.8v1.3h-0.8z M10.1,28.4h0.8v1.3h-0.8z M11.1,28.4h0.8v1.3h-0.8z M12.1,28.4h0.8v1.3h-0.8z" fill="#666666" fill-opacity="0.85"/>
<path d="M14.1,28.4h0.8v1.3h-0.8z" fill="#666666" fill-opacity="0.85"/>
<path d="M16.1,28.4h0.8v1.3h-0.8z M17.1,28.4h0.8v1.3h-0.8z M18.1,28.4h0.8v1.3h-0.8z" fill="#5555ee" fill-opacity="0.85"/>
<path d="M20.1,28.4h0.8v1.3h-0.8z M21.1,28.4h0.8v1.3h-0.8z M22.1,28.4h0.8v1.3h-0.8z M23.1,28.4h0.8v1.3h-0.8z M24.1,28.4h0.8v1.3h-0.8z M25.1,28.4h0.8v1.3h-0.8z M26.1,28.4h0.8v1.3h-0.8z" fill="#5aa0b4" fill-opacity="0.85"/>
<path d="M28.1,28.4h0.8v1.3h-0.8z M29.1,28.4h0.8v1.3h-0.8z M30.1,28.4h0.8v1.3h-0.8z M31.1,28.4h0.8v1.3h-0.8z M32.1,28.4h0.8v1.3h-0.8z M33.1,28.4h0.8v1.3h-0.8z M34.1,28.4h0.8v1.3h-0.8z M35.1,28.4h0.8v1.3h-0.8z M36.1,28.4h0.8v1.3h-0.8z M37.1,28.4h0.8v1.3h-0.8z M38.1,28.4h0.8v1.3h-0.8z M39.1,28.4h0.8v1.3h-0.8z M40.1,28.4h0.8v1.3h-0.8z M41.1,28.4h0.8v1.3h-0.8z M42.1,28.4h0.8v1.3h-0.8z M43.1,28.4h0.8v1.3h-0.8z" fill="#5aa0b4" fill-opacity="0.85"/>
<path d="M44.1,28.4h0.8v1.3h-0.8z" fill="#666666" fill-opacity="0.85"/>
<path d="M45.1,28.4h0.8v1.3h-0.8z M46.1,28.4h0.8v1.3h-0.8z M47.1,28.4h0.8v1.3h-0.8z M48.1,28.4h0.8v1.3h-0.8z M49.1,28.4h0.8v1.3h-0.8z M50.1,28.4h0.8v1.3h-0.8z M51.1,28.4h0.8v1.3h-0.8z" fill="#b45050" fill-opacity="0.85"/>
<path d="M54.1,28.4h0.8v1.3h-0.8z M55.1,28.4h0.8v1.3h-0.8z M56.1,28.4h0.8v1.3h-0.8z" fill="#5555ee" fill-opacity="0.85"/>
<path d="M58.1,28.4h0.8v1.3h-0.8z M59.1,28.4h0.8v1.3h-0.8z M60.1,28.4h0.8v1.3h-0.8z M61.1,28.4h0.8v1.3h-0.8z M62.1,28.4h0.8v1.3h-0.8z M63.1,28.4h0.8v1.3h-0.8z M64.1,28.4h0.8v1.3h-0.8z" fill="#5aa0b4" fill-opacity="0.85"/>
<path d="M66.1,28.4h0.8v1.3h-0.8z M67.1,28.4h0.8v1.3h-0.8z M68.1,28.4h0.8v1.3h-0.8z M69.1,28.4h0.8v1.3h-0.8z M70.1,28.4h0.8v1.3h-0.8z M71.1,28.4h0.8v1.3h-0.8z M72.1,28.4h0.8v1.3h-0.8z" fill="#5aa0b4" fill-opacity="0.85"/>
<path d="M73.1,28.4h0.8v1.3h-0.8z" fill="#666666" fill-opacity="0.85"/>
<path d="M74.1,28.4h0.8v1.3h-0.8z" fill="#50a080" fill-opacity="0.85"/>
<path d="M77.1,28.4h0.8v1.3h-0.8z" fill="#50a080" fill-opacity="0.85"/>
<path d="M80.1,28.4h0.8v1.3h-0.8z" fill="#50a080" fill-opacity="0.85"/>
<path d="M81.1,28.4h0.8v1.3h-0.8z" fill="#666666" fill-opacity="0.85"/>
<path d="M84.1,28.4h0.8v1.3h-0.8z M85.1,28.4h0.8v1.3h-0.8z M86.1,28.4h0.8v1.3h-0.8z M87.1,28.4h0.8v1.3h-0.8z M88.1,28.4h0.8v1.3h-0.8z" fill="#666666" fill-opacity="0.85"/>
<path d="M89.1,28.4h0.8v1.3h-0.8z" fill="#666666" fill-opacity="0.85"/>
<path d="M4.1,32.4h0.8v1.3h-0.8z M5.1,32.4h0.8v1.3h-0.8z M7.1,32.4h0.8v1.3h-0.8z M8.1,32.4h0.8v1.3h-0.8z M9.1,32.4h0.8v1.3h-0.8z M10.1,32.4h0.8v1.3h-0.8z M11.1,32.4h0.8v1.3h-0.8z M12.1,32.4h0.8v1.3h-0.8z M13.1,32.4h0.8v1.3h-0.8z M15.1,32.4h0.8v1.3h-0.8z M16.1,32.4h0.8v1.3h-0.8z M17.1,32.4h0.8v1.3h-0.8z M18.1,32.4h0.8v1.3h-0.8z M19.1,32.4h0.8v1.3h-0.8z M20.1,32.4h0.8v1.3h-0.8z M21.1,32.4h0.8v1.3h-0.8z M22.1,32.4h0.8v1.3h-0.8z M23.1,32.4h0.8v1.3h-0.8z M25.1,32.4h0.8v1.3h-0.8z M26.1,32.4h0.8v1.3h-0.8z M28.1,32.4h0.8v1.3h-0.8z M31.1,32.4h0.8v1.3h-0.8z M32.1,32.4h0.8v1.3h-0.8z M33.1,32.4h0.8v1.3h-0.8z M34.1,32.4h0.8v1.3h-0.8z M35.1,32.4h0.8v1.3h-0.8z M37.1,32.4h0.8v1.3h-0.8z M38.1,32.4h0.8v1.3h-0.8z M39.1,32.4h0.8v1.3h-0.8z M41.1,32.4h0.8v1.3h-0.8z M42.1,32.4h0.8v1.3h-0.8z M43.1,32.4h0.8v1.3h-0.8z M45.1,32.4h0.8v1.3h-0.8z M46.1,32.4h0.8v1.3h-0.8z M47.1,32.4h0.8v1.3h-0.8z M48.1,32.4h0.8v1.3h-0.8z M49.1,32.4h0.8v1.3h-0.8z M51.1,32.4h0.8v1.3h-0.8z M53.1,32.4h0.8v1.3h-0.8z M54.1,32.4h0.8v1.3h-0.8z M55.1,32.4h0.8v1.3h-0.8z M56.1,32.4h0.8v1.3h-0.8z M57.1,32.4h0.8v1.3h-0.8z M59.1,32.4h0.8v1.3h-0.8z M60.1,32.4h0.8v1.3h-0.8z M61.1,32.4h0.8v1.3h-0.8z M62.1,32.4h0.8v1.3h-0.8z M63.1,32.4h0.8v1.3h-0.8z M64.1,32.4h0.8v1.3h-0.8z" fill="#4fa24f" fill-opacity="0.85"/>
<path d="M4.1,34.4h0.8v1.3h-0.8z M5.1,34.4h0.8v1.3h-0.8z M6.1,34.4h0.8v1.3h-0.8z M7.1,34.4h0.8v1.3h-0.8z M8.1,34.4h0.8v1.3h-0.8z" fill="#666666" fill-opacity="0.85"/>
<path d="M10.1,34.4h0.8v1.3h-0.8z M11.1,34.4h0.8v1.3h-0.8z M12.1,34.4h0.8v1.3h-0.8z M13.1,34.4h0.8v1.3h-0.8z M14.1,34.4h0.8v1.3h-0.8z M15.1,34.4h0.8v1.3h-0.8z M16.1,34.4h0.8v1.3h-0.8z M17.1,34.4h0.8v1.3h-0.8z M18.1,34.4h0.8v1.3h-0.8z" fill="#666666" fill-opacity="0.85"/>
<path d="M20.1,34.4h0.8v1.3h-0.8z" fill="#666666" fill-opacity="0.85"/>
<path d="M22.1,34.4h0.8v1.3h-0.8z M24.1,34.4h0.8v1.3h-0.8z" fill="#50a080" fill-opacity="0.85"/>
<path d="M4.1,38.4h0.8v1.3h-0.8z M5.1,38.4h0.8v1.3h-0.8z M7.1,38.4h0.8v1.3h-0.8z M8.1,38.4h0.8v1.3h-0.8z M9.1,38.4h0.8v1.3h-0.8z M11.1,38.4h0.8v1.3h-0.8z M12.1,38.4h0.8v1.3h-0.8z M13.1,38.4h0.8v1.3h-0.8z M14.1,38.4h0.8v1.3h-0.8z M15.1,38.4h0.8v1.3h-0.8z M16.1,38.4h0.8v1.3h-0.8z M17.1,38.4h0.8v1.3h-0.8z M18.1,38.4h0.8v1.3h-0.8z M20.1,38.4h0.8v1.3h-0.8z M21.1,38.4h0.8v1.3h-0.8z M22.1,38.4h0.8v1.3h-0.8z M23.1,38.4h0.8v1.3h-0.8z M24.1,38.4h0.8v1.3h-0.8z M25.1,38.4h0.8v1.3h-0.8z M26.1,38.4h0.8v1.3h-0.8z M27.1,38.4h0.8v1.3h-0.8z M29.1,38.4h0.8v1.3h-0.8z M30.1,38.4h0.8v1.3h-0.8z M31.1,38.4h0.8v1.3h-0.8z M32.1,38.4h0.8v1.3h-0.8z M33.1,38.4h0.8v1.3h-0.8z" fill="#4fa24f" fill-opacity="0.85"/>
<path d="M4.1,40.4h0.8v1.3h-0.8z M5.1,40.4h0.8v1.3h-0.8z M6.1,40.4h0.8v1.3h-0.8z" fill="#5555ee" fill-opacity="0.85"/>
<path d="M8.1,40.4h0.8v1.3h-0.8z M9.1,40.4h0.8v1.3h-0.8z M10.1,40.4h0.8v1.3h-0.8z M11.1,40.4h0.8v1.3h-0.8z M12.1,40.4h0.8v1.3h-0.8z M13.1,40.4h0.8v1.3h-0.8z" fill="#666666" fill-opacity="0.85"/>
<path d="M15.1,40.4h0.8v1.3h-0.8z" fill="#666666" fill-opacity="0.85"/>
<path d="M17.1,40.4h0.8v1.3h-0.8z M18.1,40.4h0.8v1.3h-0.8z M19.1,40.4h0.8v1.3h-0.8z M20.1,40.4h0.8v1.3h-0.8z M21.1,40.4h0.8v1.3h-0.8z M22.1,40.4h0.8v1.3h-0.8z M23.1,40.4h0.8v1.3h-0.8z" fill="#5aa0b4" fill-opacity="0.85"/>
<path d="M25.1,40.4h0.8v1.3h-0.8z M26.1,40.4h0.8v1.3h-0.8z M27.1,40.4h0.8v1.3h-0.8z M28.1,40.4h0.8v1.3h-0.8z M29.1,40.4h0.8v1.3h-0.8z M30.1,40.4h0.8v1.3h-0.8z M31.1,40.4h0.8v1.3h-0.8z M32.1,40.4h0.8v1.3h-0.8z M33.1,40.4h0.8v1.3h-0.8z M34.1,40.4h0.8v1.3h-0.8z M35.1,40.4h0.8v1.3h-0.8z" fill="#5aa0b4" fill-opacity="0.85"/>
<path d="M37.1,40.4h0.8v1.3h-0.8z M38.1,40.4h0.8v1.3h-0.8z M39.1,40.4h0.8v1.3h-0.8z M40.1,40.4h0.8v1.3h-0.8z M41.1,40.4h0.8v1.3h-0.8z M42.1,40.4h0.8v1.3h-0.8z M43.1,40.4h0.8v1.3h-0.8z M44.1,40.4h0.8v1.3h-0.8z M45.1,40.4h0.8v1.3h-0.8z M46.1,40.4h0.8v1.3h-0.8z M47.1,40.4h0.8v1.3h-0.8z M48.1,40.4h0.8v1.3h-0.8z" fill="#5aa0b4" fill-opacity="0.85"/>
<path d="M49.1,40.4h0.8v1.3h-0.8z" fill="#666666" fill-opacity="0.85"/>
<path d="M50.1,40.4h0.8v1.3h-0.8z M51.1,40.4h0.8v1.3h-0.8z M52.1,40.4h0.8v1.3h-0.8z M53.1,40.4h0.8v1.3h-0.8z M54.1,40.4h0.8v1.3h-0.8z M55.1,40.4h0.8v1.3h-0.8z M56.1,40.4h0.8v1.3h-0.8z M57.1,40.4h0.8v1.3h-0.8z" fill="#b45050" fill-opacity="0.85"/>
<path d="M60.1,40.4h0.8v1.3h-0.8z" fill="#666666" fill-opacity="0.85"/>
<path d="M61.1,40.4h0.8v1.3h-0.8z M62.1,40.4h0.8v1.3h-0.8z M63.1,40.4h0.8v1.3h-0.8z M64.1,40.4h0.8v1.3h-0.8z M65.1,40.4h0.8v1.3h-0.8z M66.1,40.4h0.8v1.3h-0.8z M67.1,40.4h0.8v1.3h-0.8z M68.1,40.4h0.8v1.3h-0.8z" fill="#666666" fill-opacity="0.85"/>
<path d="M71.1,40.4h0.8v1.3h-0.8z" fill="#50a080" fill-opacity="0.85"/>
<path d="M74.1,40.4h0.8v1.3h-0.8z M75.1,40.4h0.8v1.3h-0.8z M76.1,40.4h0.8v1.3h-0.8z M77.1,40.4h0.8v1.3h-0.8z M78.1,40.4h0.8v1.3h-0.8z M79.1,40.4h0.8v1.3h-0.8z M80.1,40.4h0.8v1.3h-0.8z M81.1,40.4h0.8v1.3h-0.8z" fill="#666666" fill-opacity="0.85"/>
<path d="M84.1,40.4h0.8v1.3h-0.8z M85.1,40.4h0.8v1.3h-0.8z" fill="#50a080" fill-opacity="0.85"/>
<path d="M86.1,40.4h0.8v1.3h-0.8z" fill="#666666" fill-opacity="0.85"/>
<path d="M89.1,40.4h0.8v1.3h-0.8z M90.1,40.4h0.8v1.3h-0.8z M91.1,40.4h0.8v1.3h-0.8z M92.1,40.4h0.8v1.3h-0.8z M93.1,40.4h0.8v1.3h-0.8z" fill="#666666" fill-opacity="0.85"/>
<path d="M94.1,40.4h0.8v1.3h-0.8z" fill="#666666" fill-opacity="0.85"/>
<path d="M4.1,44.4h0.8v1.3h-0.8z M5.1,44.4h0.8v1.3h-0.8z M7.1,44.4h0.8v1.3h-0.8z M8.1,44.4h0.8v1.3h-0.8z M9.1,44.4h0.8v1.3h-0.8z M10.1,44.4h0.8v1.3h-0.8z M12.1,44.4h0.8v1.3h-0.8z M13.1,44.4h0.8v1.3h-0.8z M14.1,44.4h0.8v1.3h-0.8z M16.1,44.4h0.8v1.3h-0.8z M17.1,44.4h0.8v1.3h-0.8z M18.1,44.4h0.8v1.3h-0.8z M19.1,44.4h0.8v1.3h-0.8z M20.1,44.4h0.8v1.3h-0.8z M21.1,44.4h0.8v1.3h-0.8z M23.1,44.4h0.8v1.3h-0.8z M24.1,44.4h0.8v1.3h-0.8z M25.1,44.4h0.8v1.3h-0.8z M26.1,44.4h0.8v1.3h-0.8z M27.1,44.4h0.8v1.3h-0.8z M28.1,44.4h0.8v1.3h-0.8z M30.1,44.4h0.8v1.3h-0.8z M31.1,44.4h0.8v1.3h-0.8z M32.1,44.4h0.8v1.3h-0.8z M34.1,44.4h0.8v1.3h-0.8z M35.1,44.4h0.8v1.3h-0.8z M36.1,44.4h0.8v1.3h-0.8z M38.1,44.4h0.8v1.3h-0.8z M39.1,44.4h0.8v1.3h-0.8z M40.1,44.4h0.8v1.3h-0.8z M41.1,44.4h0.8v1.3h-0.8z M42.1,44.4h0.8v1.3h-0.8z M43.1,44.4h0.8v1.3h-0.8z" fill="#4fa24f" fill-opacity="0.85"/>
<path d="M4.1,46.4h0.8v1.3h-0.8z M5.1,46.4h0.8v1.3h-0.8z M6.1,46.4h0.8v1.3h-0.8z M7.1,46.4h0.8v1.3h-0.8z M8.1,46.4h0.8v1.3h-0.8z M9.1,46.4h0.8v1.3h-0.8z" fill="#666666" fill-opacity="0.85"/>
<path d="M11.1,46.4h0.8v1.3h-0.8z M12.1,46.4h0.8v1.3h-0.8z M13.1,46.4h0.8v1.3h-0.8z M14.1,46.4h0.8v1.3h-0.8z M15.1,46.4h0.8v1.3h-0.8z M16.1,46.4h0.8v1.3h-0.8z M17.1,46.4h0.8v1.3h-0.8z M18.1,46.4h0.8v1.3h-0.8z" fill="#666666" fill-opacity="0.85"/>
<path d="M20.1,46.4h0.8v1.3h-0.8z" fill="#666666" fill-opacity="0.85"/>
<path d="M22.1,46.4h0.8v1.3h-0.8z" fill="#666666" fill-opacity="0.85"/>
<path d="M24.1,46.4h0.8v1.3h-0.8z" fill="#50a080" fill-opacity="0.85"/>
<path d="M4.1,50.4h0.8v1.3h-0.8z M5.1,50.4h0.8v1.3h-0.8z M7.1,50.4h0.8v1.3h-0.8z M8.1,50.4h0.8v1.3h-0.8z M9.1,50.4h0.8v1.3h-0.8z M11.1,50.4h0.8v1.3h-0.8z M12.1,50.4h0.8v1.3h-0.8z M13.1,50.4h0.8v1.3h-0.8z M14.1,50.4h0.8v1.3h-0.8z M15.1,50.4h0.8v1.3h-0.8z M16.1,50.4h0.8v1.3h-0.8z M17.1,50.4h0.8v1.3h-0.8z M18.1,50.4h0.8v1.3h-0.8z M20.1,50.4h0.8v1.3h-0.8z M21.1,50.4h0.8v1.3h-0.8z M22.1,50.4h0.8v1.3h-0.8z M23.1,50.4h0.8v1.3h-0.8z M24.1,50.4h0.8v1.3h-0.8z M25.1,50.4h0.8v1.3h-0.8z M26.1,50.4h0.8v1.3h-0.8z M27.1,50.4h0.8v1.3h-0.8z M29.1,50.4h0.8v1.3h-0.8z M30.1,50.4h0.8v1.3h-0.8z M31.1,50.4h0.8v1.3h-0.8z M32.1,50.4h0.8v1.3h-0.8z M33.1,50.4h0.8v1.3h-0.8z" fill="#4fa24f" fill-opacity="0.85"/>
<path d="M4.1,52.4h0.8v1.3h-0.8z M5.1,52.4h0.8v1.3h-0.8z M6.1,52.4h0.8v1.3h-0.8z" fill="#5555ee" fill-opacity="0.85"/>
<path d="M8.1,52.4h0.8v1.3h-0.8z M9.1,52.4h0.8v1.3h-0.8z M10.1,52.4h0.8v1.3h-0.8z M11.1,52.4h0.8v1.3h-0.8z M12.1,52.4h0.8v1.3h-0.8z M13.1,52.4h0.8v1.3h-0.8z" fill="#b0b0b0" fill-opacity="0.85"/>
<path d="M15.1,52.4h0.8v1.3h-0.8z" fill="#666666" fill-opacity="0.85"/>
<path d="M17.1,52.4h0.8v1.3h-0.8z M18.1,52.4h0.8v1.3h-0.8z M19.1,52.4h0.8v1.3h-0.8z M20.1,52.4h0.8v1.3h-0.8z M21.1,52.4h0.8v1.3h-0.8z M22.1,52.4h0.8v1.3h-0.8z M23.1,52.4h0.8v1.3h-0.8z" fill="#5aa0b4" fill-opacity="0.85"/>
<path d="M25.1,52.4h0.8v1.3h-0.8z M26.1,52.4h0.8v1.3h-0.8z M27.1,52.4h0.8v1.3h-0.8z M28.1,52.4h0.8v1.3h-0.8z M29.1,52.4h0.8v1.3h-0.8z M30.1,52.4h0.8v1.3h-0.8z M31.1,52.4h0.8v1.3h-0.8z M32.1,52.4h0.8v1.3h-0.8z M33.1,52.4h0.8v1.3h-0.8z M34.1,52.4h0.8v1.3h-0.8z M35.1,52.4h0.8v1.3h-0.8z" fill="#5aa0b4" fill-opacity="0.85"/>
<path d="M37.1,52.4h0.8v1.3h-0.8z M38.1,52.4h0.8v1.3h-0.8z M39.1,52.4h0.8v1.3h-0.8z M40.1,52.4h0.8v1.3h-0.8z M41.1,52.4h0.8v1.3h-0.8z M42.1,52.4h0.8v1.3h-0.8z M43.1,52.4h0.8v1.3h-0.8z M44.1,52.4h0.8v1.3h-0.8z M45.1,52.4h0.8v1.3h-0.8z M46.1,52.4h0.8v1.3h-0.8z M47.1,52.4h0.8v1.3h-0.8z M48.1,52.4h0.8v1.3h-0.8z" fill="#5aa0b4" fill-opacity="0.85"/>
<path d="M49.1,52.4h0.8v1.3h-0.8z" fill="#666666" fill-opacity="0.85"/>
<path d="M50.1,52.4h0.8v1.3h-0.8z M51.1,52.4h0.8v1.3h-0.8z M52.1,52.4h0.8v1.3h-0.8z M53.1,52.4h0.8v1.3h-0.8z M54.1,52.4h0.8v1.3h-0.8z M55.1,52.4h0.8v1.3h-0.8z M56.1,52.4h0.8v1.3h-0.8z M57.1,52.4h0.8v1.3h-0.8z" fill="#b45050" fill-opacity="0.85"/>
<path d="M60.1,52.4h0.8v1.3h-0.8z" fill="#666666" fill-opacity="0.85"/>
<path d="M61.1,52.4h0.8v1.3h-0.8z M62.1,52.4h0.8v1.3h-0.8z M63.1,52.4h0.8v1.3h-0.8z M64.1,52.4h0.8v1.3h-0.8z M65.1,52.4h0.8v1.3h-0.8z" fill="#666666" fill-opacity="0.85"/>
<path d="M68.1,52.4h0.8v1.3h-0.8z" fill="#50a080" fill-opacity="0.85"/>
<path d="M71.1,52.4h0.8v1.3h-0.8z M72.1,52.4h0.8v1.3h-0.8z M73.1,52.4h0.8v1.3h-0.8z M74.1,52.4h0.8v1.3h-0.8z M75.1,52.4h0.8v1.3h-0.8z M76.1,52.4h0.8v1.3h-0.8z" fill="#666666" fill-opacity="0.85"/>
<path d="M79.1,52.4h0.8v1.3h-0.8z" fill="#50a080" fill-opacity="0.85"/>
<path d="M80.1,52.4h0.8v1.3h-0.8z" fill="#666666" fill-opacity="0.85"/>
<path d="M83.1,52.4h0.8v1.3h-0.8z M84.1,52.4h0.8v1.3h-0.8z M85.1,52.4h0.8v1.3h-0.8z M86.1,52.4h0.8v1.3h-0.8z M87.1,52.4h0.8v1.3h-0.8z" fill="#666666" fill-opacity="0.85"/>
<path d="M88.1,52.4h0.8v1.3h-0.8z" fill="#666666" fill-opacity="0.85"/>
<path d="M4.1,56.4h0.8v1.3h-0.8z M5.1,56.4h0.8v1.3h-0.8z M6.1,56.4h0.8v1.3h-0.8z M7.1,56.4h0.8v1.3h-0.8z M8.1,56.4h0.8v1.3h-0.8z M9.1,56.4h0.8v1.3h-0.8z" fill="#5555ee" fill-opacity="0.85"/>
<path d="M11.1,56.4h0.8v1.3h-0.8z M12.1,56.4h0.8v1.3h-0.8z M13.1,56.4h0.8v1.3h-0.8z M14.1,56.4h0.8v1.3h-0.8z M15.1,56.4h0.8v1.3h-0.8z" fill="#666666" fill-opacity="0.85"/>
<path d="M0.1,58.4h0.8v1.3h-0.8z" fill="#666666" fill-opacity="0.85"/>
  </svg>
 </div>
 <div id="mmline"></div>
 <div id="scrollmark"></div>
</div>
<div id="splitter"></div>
<div id="canvasWrap"><svg style="position:absolute;left:0;top:0" width="648" height="776" viewBox="0 0 648 776">
 <defs>
  <linearGradient id="sg" x1="0" y1="0" x2="0" y2="1"><stop offset="0" stop-color="#b4b4b4"/><stop offset="0.15" stop-color="#adadad"/><stop offset="0.5" stop-color="#7e7e7e"/><stop offset="0.8" stop-color="#4a4a4a"/><stop offset="1" stop-color="#0c0c0c"/></linearGradient>
  <radialGradient id="sr" cx="0.5" cy="0.5" r="0.5"><stop offset="0.6" stop-color="#000" stop-opacity="0"/><stop offset="1" stop-color="#000" stop-opacity="0.22"/></radialGradient>
  <radialGradient id="sh" cx="0.5" cy="0.5" r="0.5"><stop offset="0" stop-color="#fff"/><stop offset="0.45" stop-color="#fff" stop-opacity="0.95"/><stop offset="1" stop-color="#fff" stop-opacity="0"/></radialGradient>
 </defs>
 <polygon points="126.9,299.3 524.1,299.3 649.5,533 1.5,533" fill="#b2b2b2"/>
 <circle cx="325.5" cy="311" r="86" fill="url(#sg)"/>
 <circle cx="325.5" cy="311" r="86" fill="url(#sr)"/>
 <ellipse cx="325.5" cy="260.5" rx="22" ry="17" fill="url(#sh)"/>
</svg><canvas id="cv" width="648" height="776" style="position:absolute;left:0;top:0"></canvas></div>
<div id="footer"></div>
<svg style="position:absolute;left:0;top:828px" width="1304" height="29" viewBox="0 828 1304 29">
 <g fill="none" stroke="#f4f2f8" stroke-width="1.9" stroke-linejoin="round">
  <path d="M1133,837.9 L1147,837.9 Q1149,837.9 1149,839.9 L1149,848.8 Q1149,850.8 1147,850.8 L1140.6,850.8 L1135.3,854.8 L1134.8,850.8 L1133,850.8 Q1131,850.8 1131,848.8 L1131,839.9 Q1131,837.9 1133,837.9Z"/>
  <path d="M1170,836.8 L1181,836.8 Q1182.7,836.8 1182.7,838.5 L1182.7,853 L1168.2,853 L1168.2,838.5 Q1168.2,836.8 1170,836.8Z"/>
  <rect x="1170.9" y="839.7" width="8.6" height="2.7" rx="0.8" stroke-width="1.4"/>
  <circle cx="1208" cy="844" r="6.4" stroke-width="1.7"/>
  <path d="M1212.7,849.2 L1218,854.2" stroke-width="1.7" stroke-linecap="round"/>
 </g>
 <path d="M1167.5,853.3 L1183.5,853.3 L1183.5,855.6 L1169,855.6 Q1167.5,855.6 1167.5,854Z" fill="#b3b0bd"/>
</svg>
<div class="tx" id="t_fps" style="-webkit-text-stroke:0.45px currentColor;left:1249.7px;top:838.8px;transform:scaleX(0.79);font-size:15.6px;color:#fff">60 fps</div>
<div id="tooltip">Download<br>Shift+Ctrl+S</div>
<script>
(function(){
var cv=document.getElementById('cv');if(!cv||!cv.getContext)return;
var ctx=cv.getContext('2d');var W=648,H=776;
var img=ctx.createImageData(W,H);var d=img.data;
var cx=W/2+1.5,cy=H/2;var f=(H/2)/Math.tan(0.4);
var cam=[0,5,-10];
var fw=[0,-5,10];var fl=Math.sqrt(125);fw=[0,fw[1]/fl,fw[2]/fl];
var rt=[1,0,0];var up=[0,fw[2],-fw[1]]; // cross
// up = cross(fw, rt)? for LH: up=(0,0.894,0.447)
up=[0,0.894427,0.447214];
var bg=[51,51,76.5];
var SS=3;
function shade(px,py){
 // ray dir
 var sx=(px-cx)/f, sy=-(py-cy)/f;
 var dx=fw[0]+rt[0]*sx+up[0]*sy, dy=fw[1]+rt[1]*sx+up[1]*sy, dz=fw[2]+rt[2]*sx+up[2]*sy;
 var dl=Math.sqrt(dx*dx+dy*dy+dz*dz);dx/=dl;dy/=dl;dz/=dl;
 var tbest=1e9,nx=0,ny=0,nz=0,hit=0,hx,hy,hz;
 // sphere center (0,1,0) r=1
 var ox=cam[0],oy=cam[1]-1,oz=cam[2];
 var b=ox*dx+oy*dy+oz*dz;var c=ox*ox+oy*oy+oz*oz-1;var disc=b*b-c;
 if(disc>0){var t=-b-Math.sqrt(disc);if(t>0){tbest=t;hit=1;}}
 // ground y=0, |x|<=3 |z|<=3
 if(dy<0){var t2=-cam[1]/dy;if(t2<tbest){var gx=cam[0]+dx*t2,gz=cam[2]+dz*t2;if(Math.abs(gx)<=3&&Math.abs(gz)<=3){tbest=t2;hit=2;}}}
 if(!hit)return bg;
 hx=cam[0]+dx*tbest;hy=cam[1]+dy*tbest;hz=cam[2]+dz*tbest;
 if(hit==1){nx=hx;ny=hy-1;nz=hz;}else{nx=0;ny=1;nz=0;}
 var vx=cam[0]-hx,vy=cam[1]-hy,vz=cam[2]-hz;var vl=Math.sqrt(vx*vx+vy*vy+vz*vz);vx/=vl;vy/=vl;vz/=vl;
 var ndl=ny*0.5+0.5;
 var diff=0.7*ndl;
 var ax=vx,ay=vy+1,az=vz;var al=Math.sqrt(ax*ax+ay*ay+az*az);ax/=al;ay/=al;az/=al;
 var sc=Math.max(0,nx*ax+ny*ay+nz*az);sc=Math.pow(sc,64)*0.7;
 var v=Math.min(1,diff)+sc; if(v>1)v=1;
 var g=v*255;return [g,g,g];
}
for(var y=0;y<H;y++){for(var x=0;x<W;x++){
 var r=0,g=0,bl=0;
 var c0=shade(x+0.5,y+0.5);
 var edge=false;
 // quick edge test
 var c1=shade(x+0.01,y+0.01),c2=shade(x+0.99,y+0.99),c3=shade(x+0.99,y+0.01),c4=shade(x+0.01,y+0.99);
 if(Math.abs(c1[2]-c2[2])>2||Math.abs(c1[2]-c3[2])>2||Math.abs(c1[2]-c4[2])>2||Math.abs(c0[2]-c1[2])>6){
  for(var j=0;j<4;j++)for(var i=0;i<4;i++){var s=shade(x+(i+0.5)/4,y+(j+0.5)/4);r+=s[0];g+=s[1];bl+=s[2];}
  r/=16;g/=16;bl/=16;
 } else {r=c0[0];g=c0[1];bl=c0[2];}
 var k=(y*W+x)*4;d[k]=r;d[k+1]=g;d[k+2]=bl;d[k+3]=255;
}}
ctx.putImageData(img,0,0);
})();

</script>
</body></html>
